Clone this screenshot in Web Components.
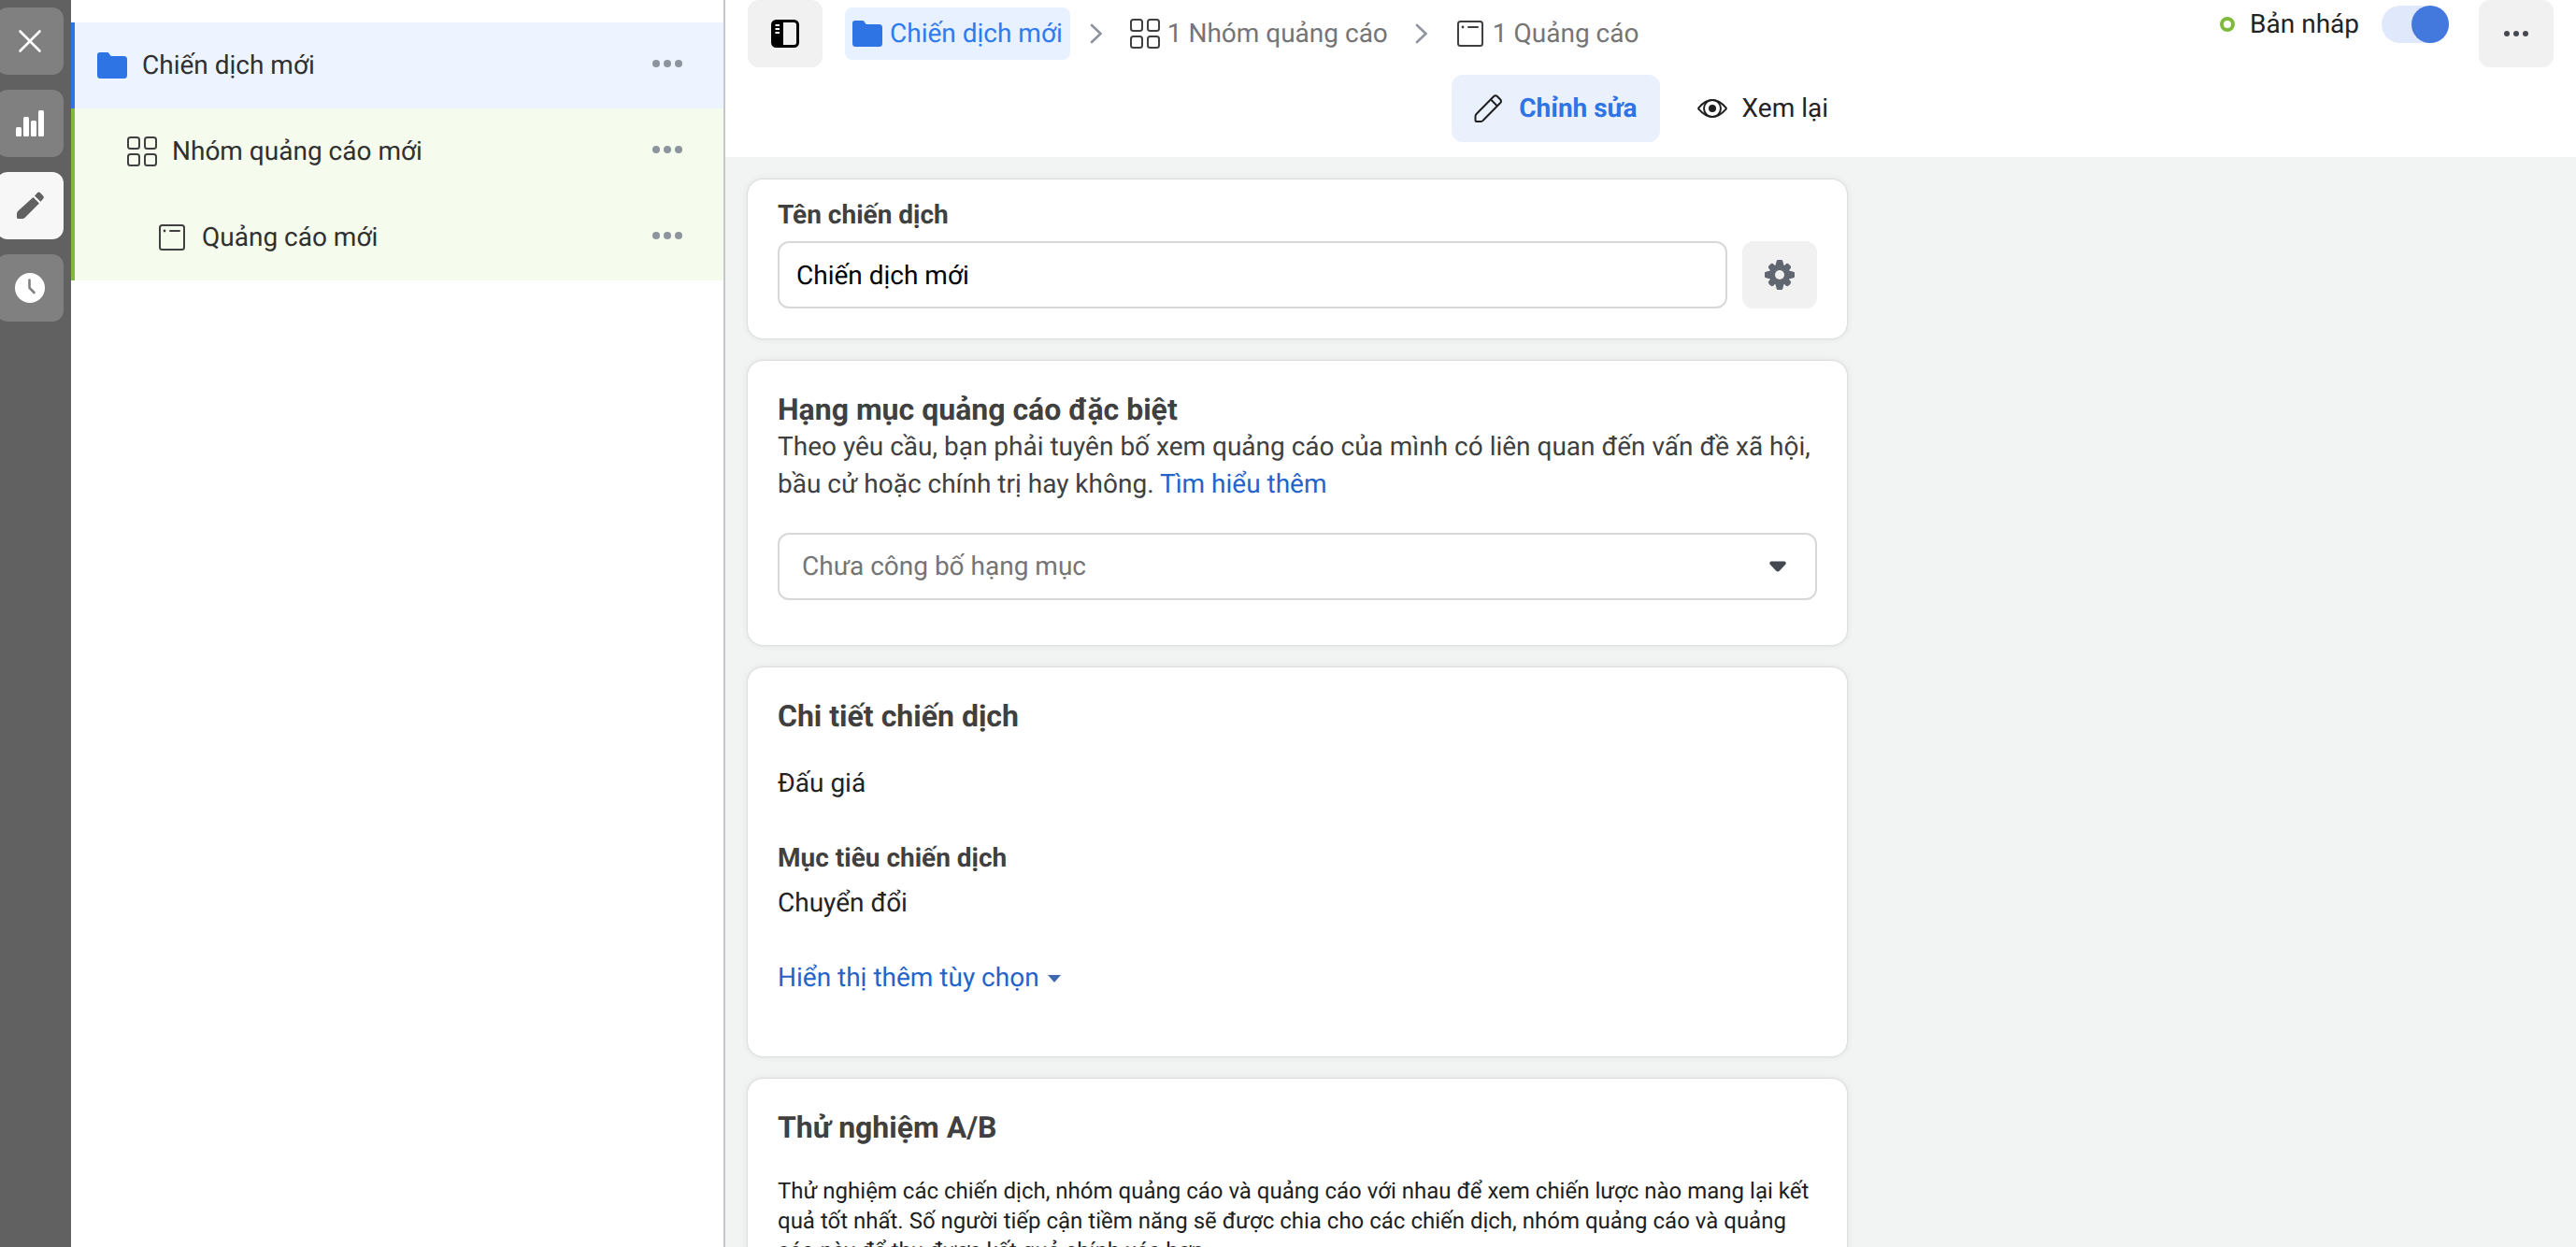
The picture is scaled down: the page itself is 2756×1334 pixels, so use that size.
<!DOCTYPE html>
<html lang="vi">
<head>
<meta charset="utf-8">
<meta name="viewport" content="width=device-width, initial-scale=1">
<title>Chiến dịch mới</title>
<style>
  :root {
    --blue: #2e74e5;
    --link: #2563c9;
    --ink: #303031;
    --heading: #404040;
    --field-border: #d8d8d8;
    --soft: #f1f1f1;
    --green: #7fba3c;
  }
  body { margin: 0; background: #fff; font-family: Roboto, "Liberation Sans", sans-serif; font-size: 28px; line-height: 40px; color: #232323; text-rendering: geometricPrecision; }
</style>
</head>
<body>
<campaign-app></campaign-app>

<script>
const ICONS = {
  close: ['0 0 32 32', '<path d="M5.500 5.500L26.500 26.500M26.500 5.500L5.500 26.500" fill="none" stroke="currentColor" stroke-width="2.600" stroke-linecap="round"/>'],
  chart: ['0 0 32 32', '<g fill="currentColor"><rect x="1" y="20" width="6" height="10" rx="1.500"/><rect x="9" y="9" width="6" height="21" rx="1.500"/><rect x="17" y="13" width="6" height="17" rx="1.500"/><rect x="25" y="2" width="6" height="28" rx="1.500"/></g>'],
  pencil: ['0 0 32 32', '<g fill="currentColor"><path d="M19.500 7L26 13.500L10.500 29Q9.500 30 8 30H3.500Q2 30 2 28.500V24.500Q2 23 3 22Z"/><path d="M21 5.500L24 2.200Q25.500 .700 27 2.200L30 5.200Q31.800 7 30.300 8.500L27.500 11.800Z"/></g>'],
  clock: ['0 0 32 32', '<circle cx="16" cy="16" r="16" fill="currentColor"/><path d="M15.500 7.500V15Q15.500 16 16.200 16.700L20.500 21" fill="none" stroke="#808080" stroke-width="2.600" stroke-linecap="round"/>'],
  folder: ['0 0 32 32', '<path d="M0 5Q0 2 3 2H10.500Q12 2 12.800 3.300L14 5.200Q14.500 6 15.500 6H28.500Q32 6 32 9.500V26.500Q32 30 28.500 30H3.500Q0 30 0 26.500Z" fill="#2e74e5"/>'],
  grid: ['0 0 32 32', '<g fill="none" stroke="#404040" stroke-width="2"><rect x="1" y="1" width="12" height="12" rx="2.500"/><rect x="19" y="1" width="12" height="12" rx="2.500"/><rect x="1" y="19" width="12" height="12" rx="2.500"/><rect x="19" y="19" width="12" height="12" rx="2.500"/></g>'],
  ad: ['0 0 32 32', '<rect x="3" y="3" width="26" height="26" rx="2.500" fill="none" stroke="#404040" stroke-width="2"/><circle cx="8" cy="9" r="1.400" fill="#404040"/><path d="M14 9H24" stroke="#404040" stroke-width="2" stroke-linecap="round"/>'],
  dots: ['0 0 32 32', '<g fill="currentColor"><circle cx="4" cy="14" r="4"/><circle cx="16" cy="14" r="4"/><circle cx="28" cy="14" r="4"/></g>'],
  more: ['0 0 32 32', '<g fill="currentColor"><circle cx="6" cy="16" r="3"/><circle cx="16" cy="16" r="3"/><circle cx="26" cy="16" r="3"/></g>'],
  panel: ['0 0 32 32', '<rect x="2.500" y="2.500" width="27" height="27" rx="4" fill="none" stroke="#000" stroke-width="3"/><path d="M3 3H14V29H3Z" fill="#000"/><path d="M5.500 7H10M5.500 11H10M5.500 15H10" stroke="#fff" stroke-width="2"/>'],
  chevron: ['0 0 16 32', '<path d="M3 7L12.500 16L3 25" fill="none" stroke="#8d949e" stroke-width="2.600" stroke-linecap="round"/>'],
  edit: ['0 0 32 32', '<g fill="none" stroke="#1f1f1f" stroke-width="2" stroke-linejoin="round"><path d="M1.500 24.500Q1.500 23 2.500 22L21 3.200Q23 1.200 25 3.200L28 6.200Q30 8.200 28 10.200L9.500 29Q8.700 30 7.500 30H2.500Q1.500 30 1.500 29Z"/><path d="M18 6.500L25 13.500"/></g>'],
  eye: ['0 0 32 32', '<g fill="none" stroke="#1f1f1f" stroke-width="2"><path d="M1.800 17.200Q.600 16 1.800 14.800Q8.500 7 16 7T30.200 14.800Q31.400 16 30.200 17.200Q23.500 25 16 25T1.800 17.200Z" stroke-linejoin="round"/><circle cx="16" cy="16" r="9"/></g><circle cx="16" cy="16" r="4" fill="#1f1f1f"/>'],
  gear: ['0 0 32 32', '<g fill="#606770"><path id="v" d="M14 0H18Q19 0 19.300 1.200L21 8V24L19.300 30.800Q19 32 18 32H14Q13 32 12.700 30.800L11 24V8L12.700 1.200Q13 0 14 0Z"/><path d="M0 14V18Q0 19 1.200 19.300L8 21H24L30.800 19.300Q32 19 32 18V14Q32 13 30.800 12.700L24 11H8L1.200 12.700Q0 13 0 14Z"/><rect x="12.500" y="1" width="7" height="30" rx="2.500" transform="rotate(45 16 16)"/><rect x="12.500" y="1" width="7" height="30" rx="2.500" transform="rotate(135 16 16)"/><circle cx="16" cy="16" r="11"/></g><circle cx="16" cy="16" r="5" fill="#f1f1f1"/>'],
  caret: ['0 0 32 32', '<path d="M8.500 10.500H23.500Q25.500 11.500 24.500 13.500L18 20.500Q16 22.500 14 20.500L7.500 13.500Q6.500 11.500 8.500 10.500Z" fill="#444950"/>'],
  smallcaret: ['0 0 16 16', '<path d="M1 5H15L8 13Z" fill="#4267b2"/>']
};

const BASE = `
  *, *::before, *::after { box-sizing: border-box; }
  button, input, select { font: inherit; color: inherit; margin: 0; text-rendering: inherit; }
  button { border: 0; background: none; padding: 0; cursor: pointer; }
  a { color: var(--link); text-decoration: none; }
`;

function define(name, css, html) {
  customElements.define(name, class extends HTMLElement {
    constructor() {
      super();
      const template = document.createElement('template');
      template.innerHTML = `<style>${BASE}${css}</style>${html}`;
      this.attachShadow({ mode: 'open' }).append(template.content.cloneNode(true));
    }
  });
}

class UiIcon extends HTMLElement {
  connectedCallback() {
    if (this.shadowRoot) return;
    const [box, body] = ICONS[this.getAttribute('name')];
    this.attachShadow({ mode: 'open' }).innerHTML = `
      <style>:host { display: block; flex: none; width: 32px; height: 32px; }
      :host([narrow]) { width: 16px; } :host([small]) { width: 16px; height: 16px; }
      svg { display: block; width: 100%; height: 100%; }</style>
      <svg viewBox="${box}" aria-hidden="true">${body}</svg>`;
  }
}
customElements.define('ui-icon', UiIcon);

class RailButton extends HTMLElement {
  connectedCallback() {
    if (this.shadowRoot) return;
    this.attachShadow({ mode: 'open' }).innerHTML = `
      <style>${BASE}
      :host { display: block; }
      button { display: grid; place-items: center; width: 100%; height: 72px; border-radius: 12px; background: #808080; color: #fff; }
      :host([active]) button { background: #f7f7f7; color: #616161; }</style>
      <button type="button" aria-label="${this.getAttribute('label')}"><ui-icon name="${this.getAttribute('icon')}"></ui-icon></button>`;
  }
}
customElements.define('rail-button', RailButton);

define('side-rail', `
  :host { display: flex; flex-direction: column; gap: 16px; width: 76px; flex: none; padding: 8px 8px 0 0; background: #616161; box-sizing: border-box; }
  rail-button { margin-left: -4px; }`, `
  <rail-button label="Đóng" icon="close"></rail-button>
  <rail-button label="Biểu đồ" icon="chart"></rail-button>
  <rail-button label="Chỉnh sửa" icon="pencil" active></rail-button>
  <rail-button label="Lịch sử" icon="clock"></rail-button>`);

class TreeRow extends HTMLElement {
  connectedCallback() {
    if (this.shadowRoot) return;
    this.attachShadow({ mode: 'open' }).innerHTML = `
      <style>${BASE}
      :host { display: flex; align-items: center; height: 92px; padding: 0 44px 0 calc(24px + var(--level) * 32px); border-left: 4px solid var(--green); background: #f5fbed; color: var(--ink); }
      :host([selected]) { border-color: var(--blue); background: #edf4ff; }
      .name { flex: 1; display: flex; align-items: center; gap: 16px; text-align: left; }
      .menu { color: #8d949e; }</style>
      <button class="name" type="button"><ui-icon name="${this.getAttribute('icon')}"></ui-icon><slot></slot></button>
      <button class="menu" type="button" aria-label="Tùy chọn khác"><ui-icon name="dots"></ui-icon></button>`;
    this.style.setProperty('--level', this.getAttribute('level'));
  }
}
customElements.define('tree-row', TreeRow);

define('campaign-tree', `
  :host { display: block; width: 700px; flex: none; box-sizing: border-box; padding-top: 24px; border-right: 2px solid #c5c7cd; background: #fff; }`, `
  <tree-row level="0" icon="folder" selected>Chiến dịch mới</tree-row>
  <tree-row level="1" icon="grid">Nhóm quảng cáo mới</tree-row>
  <tree-row level="2" icon="ad">Quảng cáo mới</tree-row>`);

class IconButton extends HTMLElement {
  connectedCallback() {
    if (this.shadowRoot) return;
    this.attachShadow({ mode: 'open' }).innerHTML = `
      <style>${BASE}
      :host { display: block; flex: none; }
      button { display: grid; place-items: center; width: 80px; height: 72px; border-radius: 12px; background: var(--soft); color: #444950; }</style>
      <button type="button" aria-label="${this.getAttribute('label')}"><ui-icon name="${this.getAttribute('icon')}"></ui-icon></button>`;
  }
}
customElements.define('icon-button', IconButton);

define('bread-crumb', `
  :host { display: block; padding-top: 8px; }
  nav { display: flex; align-items: center; gap: 16px; }
  a { display: flex; align-items: center; gap: 8px; height: 56px; padding: 0 8px; border-radius: 8px; color: #757575; white-space: nowrap; }
  a[aria-current] { background: #e7f1ff; color: #2f7bee; }
  ui-icon[narrow] { margin: 0 4px; }`, `
  <nav aria-label="Đường dẫn">
    <a href="#campaign" aria-current="page"><ui-icon name="folder"></ui-icon>Chiến dịch mới</a>
    <ui-icon name="chevron" narrow></ui-icon>
    <a href="#adset"><ui-icon name="grid"></ui-icon>1 Nhóm quảng cáo</a>
    <ui-icon name="chevron" narrow></ui-icon>
    <a href="#ad"><ui-icon name="ad"></ui-icon>1 Quảng cáo</a>
  </nav>`);

define('draft-status', `
  :host { display: flex; align-items: center; gap: 24px; height: 52px; }
  label { display: flex; align-items: center; gap: 16px; }
  label::before { content: ""; width: 16px; height: 16px; border: 4px solid var(--green); border-radius: 50%; }
  input { appearance: none; display: flex; justify-content: flex-end; width: 72px; height: 40px; border-radius: 20px; background: #e0e9fb; }
  input::before { content: ""; width: 40px; height: 40px; border-radius: 50%; background: #4378dd; }
  input:not(:checked) { justify-content: flex-start; }`, `
  <label for="draft">Bản nháp</label>
  <input id="draft" type="checkbox" role="switch" checked>`);

define('view-tabs', `
  :host { display: flex; justify-content: flex-end; gap: 16px; max-width: 1176px; }
  button { display: flex; align-items: center; gap: 16px; height: 72px; padding: 0 24px; border-radius: 12px; }
  button[aria-pressed="true"] { background: #eaf1fd; color: var(--blue); font-weight: 700; }
  button:last-child { padding-right: 20px; }`, `
  <button type="button" aria-pressed="true"><ui-icon name="edit"></ui-icon>Chỉnh sửa</button>
  <button type="button" aria-pressed="false"><ui-icon name="eye"></ui-icon>Xem lại</button>`);

define('editor-header', `
  :host { display: flex; flex-direction: column; gap: 8px; flex: none; padding: 0 24px 16px; background: #fff; }
  .row { display: flex; align-items: flex-start; gap: 24px; }
  .end { display: flex; align-items: flex-start; gap: 32px; margin-left: auto; }`, `
  <div class="row">
    <icon-button label="Ẩn bảng điều khiển" icon="panel"></icon-button>
    <bread-crumb></bread-crumb>
    <div class="end"><draft-status></draft-status><icon-button label="Thêm" icon="more"></icon-button></div>
  </div>
  <view-tabs></view-tabs>`);

define('form-card', `
  :host { display: block; flex: none; padding: 32px 32px 48px; border-radius: 16px; background: #fff; box-shadow: 0 0 2px rgba(0,0,0,.2), 0 0 8px rgba(0,0,0,.08); }
  ::slotted(h2) { margin: 0; font-size: 32px; line-height: 40px; font-weight: 700; color: var(--heading); }`, `
  <slot name="title"></slot><slot></slot>`);

define('name-field', `
  :host { display: flex; flex-direction: column; gap: 8px; }
  label { font-weight: 700; color: var(--heading); }
  .line { display: flex; gap: 16px; }
  input { flex: 1; min-width: 0; height: 72px; padding: 0 18px; border: 2px solid var(--field-border); border-radius: 12px; background: #fff; color: #000; }`, `
  <label for="name">Tên chiến dịch</label>
  <div class="line"><input id="name" type="text" value="Chiến dịch mới"><icon-button label="Cài đặt tên" icon="gear"></icon-button></div>`);

define('category-field', `
  :host { display: block; color: var(--heading); }
  p { margin: 0 0 32px; }
  .box { display: grid; align-items: center; }
  .box > * { grid-area: 1 / 1; }
  select { appearance: none; width: 100%; height: 72px; padding: 0 64px 0 24px; border: 2px solid var(--field-border); border-radius: 12px; background: #fff; color: #757575; }
  ui-icon { justify-self: end; margin-right: 26px; pointer-events: none; }`, `
  <p>Theo yêu cầu, bạn phải tuyên bố xem quảng cáo của mình có liên quan đến vấn đề xã hội, bầu cử hoặc chính trị hay không. <a href="#help">Tìm hiểu thêm</a></p>
  <div class="box"><select aria-label="Hạng mục quảng cáo đặc biệt"><option>Chưa công bố hạng mục</option></select><ui-icon name="caret"></ui-icon></div>`);

define('campaign-details', `
  :host { display: flex; flex-direction: column; gap: 40px; padding: 32px 0 16px; }
  p, dl, dd { margin: 0; }
  dl { display: flex; flex-direction: column; gap: 8px; }
  dt { font-weight: 700; color: var(--heading); }
  button { display: flex; align-items: center; gap: 8px; align-self: flex-start; color: var(--link); }`, `
  <p>Đấu giá</p>
  <dl><dt>Mục tiêu chiến dịch</dt><dd>Chuyển đổi</dd></dl>
  <button type="button">Hiển thị thêm tùy chọn<ui-icon name="smallcaret" small></ui-icon></button>`);

define('ab-test', `
  :host { display: block; padding-top: 32px; font-size: 24px; line-height: 32px; color: #1c1e21; }
  p { margin: 0; }`, `
  <p>Thử nghiệm các chiến dịch, nhóm quảng cáo và quảng cáo với nhau để xem chiến lược nào mang lại kết quả tốt nhất. Số người tiếp cận tiềm năng sẽ được chia cho các chiến dịch, nhóm quảng cáo và quảng cáo này để thu được kết quả chính xác hơn.</p>`);

define('campaign-form', `
  :host { display: block; flex: 1; min-height: 0; overflow: auto; scrollbar-width: none; background: #f2f4f4; }
  form { display: flex; flex-direction: column; gap: 24px; max-width: 1224px; padding: 24px; }
  .compact { padding: 18px 32px 32px; }`, `
  <form>
    <form-card class="compact"><name-field></name-field></form-card>
    <form-card><h2 slot="title">Hạng mục quảng cáo đặc biệt</h2><category-field></category-field></form-card>
    <form-card><h2 slot="title">Chi tiết chiến dịch</h2><campaign-details></campaign-details></form-card>
    <form-card><h2 slot="title">Thử nghiệm A/B</h2><ab-test></ab-test></form-card>
  </form>`);

define('campaign-app', `
  :host { display: flex; height: 100vh; overflow: hidden; }
  main { flex: 1; min-width: 0; display: flex; flex-direction: column; }`, `
  <side-rail></side-rail>
  <campaign-tree></campaign-tree>
  <main><editor-header></editor-header><campaign-form></campaign-form></main>`);
</script>
</body>
</html>
